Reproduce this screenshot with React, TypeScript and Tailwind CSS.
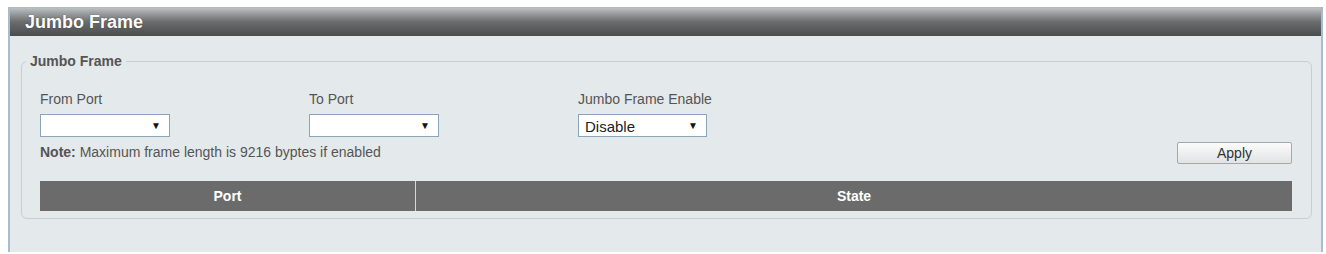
import React from "react";

function Select({ value, width = "w-[130px]" }: { value?: string; width?: string }) {
  return (
    <div
      className={`flex h-[23px] ${width} items-center justify-between border border-[#8aa4bd] bg-white pl-[6px] pr-[8px] text-[15px] text-[#222]`}
    >
      <span className="mt-[3px]">{value ?? ""}</span>
      <span className="text-[10px] text-[#111]">▼</span>
    </div>
  );
}

export default function App() {
  return (
    <div className="min-h-[254px] bg-white pt-[7px] pl-[8px] pr-[3px] font-['Liberation_Sans',Arial,sans-serif]">
      <div className="h-[245px] border-x-2 border-t border-[#a9bccb] bg-[#e4e9eb]">
        <div className="flex h-[28px] items-center bg-gradient-to-b from-[#bcc0c2] via-[#6a6b6d] to-[#4c4d4f] pl-[15px]">
          <span className="text-[18px] font-bold text-white [text-shadow:0_0_1px_#333]">Jumbo Frame</span>
        </div>
        <div className="pl-[11px] pr-[9px] pt-[17px]">
          <fieldset className="rounded-[6px] border border-[#c8ced1] pb-[7px] pl-[18px] pr-[19px]">
            <legend className="ml-[-14px] px-[4px] text-[14px] leading-[16px] font-bold text-[#555]">
              Jumbo Frame
            </legend>
            <div className="mt-[21px] flex text-[14px] text-[#555]">
              <div className="w-[269px]">
                <div className="h-[18px] leading-[18px]">From Port</div>
                <div className="mt-[6px]">
                  <Select />
                </div>
              </div>
              <div className="w-[269px]">
                <div className="h-[18px] leading-[18px]">To Port</div>
                <div className="mt-[6px]">
                  <Select />
                </div>
              </div>
              <div>
                <div className="h-[18px] leading-[18px]">Jumbo Frame Enable</div>
                <div className="mt-[6px]">
                  <Select value="Disable" width="w-[129px]" />
                </div>
              </div>
            </div>
            <div className="mt-[5px] flex items-start justify-between">
              <div className="mt-[2px] text-[14px] leading-[16px] text-[#555]">
                <span className="font-bold">Note:</span> Maximum frame length is 9216 byptes if enabled
              </div>
              <button className="h-[22px] w-[115px] rounded-[2px] border border-[#a5a9ab] bg-gradient-to-b from-[#fbfbfb] to-[#e2e3e4] text-[14px] text-[#333]">
                Apply
              </button>
            </div>
            <div className="mt-[17px] flex h-[30px] bg-[#6b6b6b] text-[14px] font-bold text-white">
              <div className="flex w-[376px] items-center justify-center border-r border-[#d6d6d6]">Port</div>
              <div className="flex flex-1 items-center justify-center">State</div>
            </div>
          </fieldset>
        </div>
      </div>
    </div>
  );
}
